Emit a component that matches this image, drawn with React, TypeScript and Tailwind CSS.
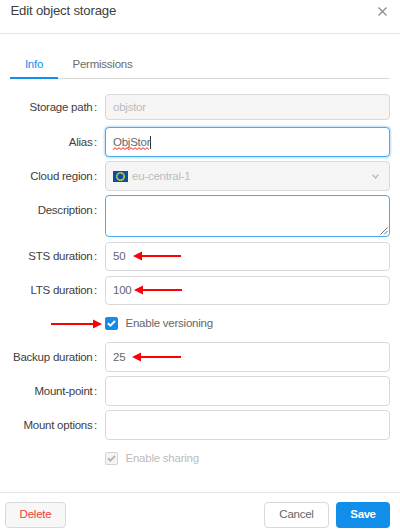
import type { ReactNode } from 'react';

function Label({ text }: { text?: string }) {
  return (
    <div className="flex h-[26px] w-[105px] shrink-0 items-center justify-end pr-2 whitespace-nowrap text-[#404040]">
      {text && (
        <>
          <span>{text}</span>
          <span className="ml-[1.5px]">:</span>
        </>
      )}
    </div>
  );
}

function Row({ label, className, children }: { label?: string; className: string; children?: ReactNode }) {
  return (
    <div className={`flex items-center ${className}`}>
      <Label text={label} />
      {children}
    </div>
  );
}

const box = 'relative flex h-full w-[285px] items-center rounded-[4px] border pl-[7px]';
const plain = `${box} border-[#d9d9d9] bg-white text-[#666]`;
const disabled = `${box} border-[#d9d9d9] bg-[#f5f5f5] text-[#bcbcbc]`;

function Arrow({ width, right, className }: { width: number; right?: boolean; className: string }) {
  return (
    <svg width={width} height="10" viewBox={`0 0 ${width} 10`} className={`absolute ${className}`}>
      <g fill="#fb0007" transform={right ? `translate(${width} 0) scale(-1 1)` : undefined}>
        <path d="M0 5 9 0.6V9.4Z" />
        <path d={`M8 4.1H${width}V5.9H8Z`} />
      </g>
    </svg>
  );
}

function Check({ muted }: { muted?: boolean }) {
  return (
    <span
      className={`flex size-[13px] items-center justify-center rounded-[2px] border ${
        muted ? 'border-[#d4d4d4] bg-[#f5f5f5]' : 'border-[#108ee9] bg-[#108ee9]'
      }`}
    >
      <svg width="9" height="9" viewBox="0 0 9 9" fill="none" stroke={muted ? '#b5b5b5' : '#fff'} strokeWidth="1.9">
        <path d="M0.9 4.3 3.4 6.7 8 2" />
      </svg>
    </span>
  );
}

function Flag() {
  return (
    <svg width="15" height="11" viewBox="0 0 15 11">
      <rect width="15" height="11" fill="#0b4ea2" />
      <circle cx="7.5" cy="5.5" r="3.7" fill="none" stroke="#c9cc35" strokeWidth="1.7" strokeDasharray="1.7 0.24" />
    </svg>
  );
}

function Squiggle() {
  return (
    <svg width="37" height="3" viewBox="0 0 37 3" className="absolute bottom-[-1px] left-0" fill="none" stroke="#f22" strokeWidth="1">
      <path d="M0 2.5 2 .7 4 2.5 6 .7 8 2.5 10 .7 12 2.5 14 .7 16 2.5 18 .7 20 2.5 22 .7 24 2.5 26 .7 28 2.5 30 .7 32 2.5 34 .7 36 2.5" />
    </svg>
  );
}

export default function App() {
  return (
    <div className="flex h-[532px] w-[400px] flex-col overflow-hidden bg-white font-['Liberation_Sans',Arial,sans-serif] text-[11.5px] leading-[14px] tracking-[-0.24px]">
      <header className="flex h-[34px] shrink-0 items-start justify-between border-b border-[#e6e6e6] pt-[3px] pr-[13px] pl-[10.5px]">
        <h1 className="text-[13.2px] leading-4 tracking-[-0.19px] text-[#404040]">Edit object storage</h1>
        <svg width="9" height="9" viewBox="0 0 9 9" className="mt-[4px]" stroke="#8c8c8c" strokeWidth="1.3">
          <path d="M0.5 0.5 8.5 8.5M8.5 0.5 0.5 8.5" />
        </svg>
      </header>

      <nav className="mx-[10px] mt-[14px] flex h-[31px] shrink-0 border-b border-[#d9d9d9]">
        <div className="flex h-[31px] w-[48px] items-center justify-center border-b-2 border-[#108ee9] pt-[2px] text-[#108ee9]">Info</div>
        <div className="flex h-[31px] items-center border-b-2 border-transparent pt-[2px] pl-[14.5px] text-[#6b6b6b]">Permissions</div>
      </nav>

      <main className="flex flex-col pt-[15px]">
        <Row label="Storage path" className="h-[26px]">
          <div className={disabled}>objstor</div>
        </Row>
        <Row label="Alias" className="mt-[7px] h-[30px]">
          <div className={`${box} border-[#49a9ee] bg-white text-[#666] shadow-[0_0_0_1.5px_rgba(16,142,233,0.2)]`}>
            <span className="relative">
              ObjStor
              <Squiggle />
            </span>
            <span className="h-[13px] w-px bg-[#333]" />
          </div>
        </Row>
        <Row label="Cloud region" className="mt-[4px] h-[30px]">
          <div className={disabled}>
            <Flag />
            <span className="ml-[4px]">eu-central-1</span>
            <svg width="7" height="5" viewBox="0 0 7 5" className="mr-[10px] ml-auto" fill="none" stroke="#b8b8b8" strokeWidth="1.2">
              <path d="M0.5 0.5 3.5 4 6.5 0.5" />
            </svg>
          </div>
        </Row>
        <div className="mt-[4px] flex h-[42px] items-start">
          <div className="pt-[2px]">
            <Label text="Description" />
          </div>
          <div className={`${box} items-end justify-end border-[#49a9ee] bg-white pr-px pb-px`}>
            <svg width="8" height="8" viewBox="0 0 8 8" stroke="#707070" strokeWidth="1">
              <path d="M0.5 7.5 7.5 0.5M4 7.5 7.5 4" />
            </svg>
          </div>
        </div>
        <div className="mt-[5px] flex h-[29px] items-start">
          <div className="pt-px">
            <Label text="STS duration" />
          </div>
          <div className={plain}>
            <span className="pb-px">50</span>
            <Arrow width={48} className="top-[8px] left-[27px]" />
          </div>
        </div>
        <div className="mt-[5px] flex h-[29px] items-start">
          <div className="pt-px">
            <Label text="LTS duration" />
          </div>
          <div className={plain}>
            <span className="pb-px">100</span>
            <Arrow width={48} className="top-[8px] left-[28px]" />
          </div>
        </div>
        <Row className="relative mt-[11px] h-[14px]">
          <Arrow width={51} right className="top-[3px] left-[51px]" />
          <Check />
          <span className="ml-[7.5px] text-[#666]">Enable versioning</span>
        </Row>
        <Row label="Backup duration" className="mt-[12px] h-[30px]">
          <div className={plain}>
            25
            <Arrow width={49} className="top-[9px] left-[26px]" />
          </div>
        </Row>
        <Row label="Mount-point" className="mt-[4px] h-[30px]">
          <div className={plain} />
        </Row>
        <Row label="Mount options" className="mt-[4px] h-[30px]">
          <div className={plain} />
        </Row>
        <Row className="mt-[11px] h-[14px]">
          <Check muted />
          <span className="ml-[7.5px] text-[#bcbcbc]">Enable sharing</span>
        </Row>
      </main>

      <footer className="mt-auto flex h-[40px] shrink-0 items-start border-t border-[#e6e6e6] pt-[9px] pr-[10px] pl-[5px]">
        <button className="h-[26px] w-[61px] rounded-[4px] border border-[#d9d9d9] bg-[#f7f7f7] pb-[2px] text-[#f04134]">Delete</button>
        <button className="ml-auto h-[26px] w-[65px] rounded-[4px] border border-[#d9d9d9] bg-white pb-[2px] text-[#666]">Cancel</button>
        <button className="ml-[7px] h-[26px] w-[54px] rounded-[4px] bg-[#108ee9] pb-[2px] font-bold tracking-[-0.4px] text-white">Save</button>
      </footer>
    </div>
  );
}
